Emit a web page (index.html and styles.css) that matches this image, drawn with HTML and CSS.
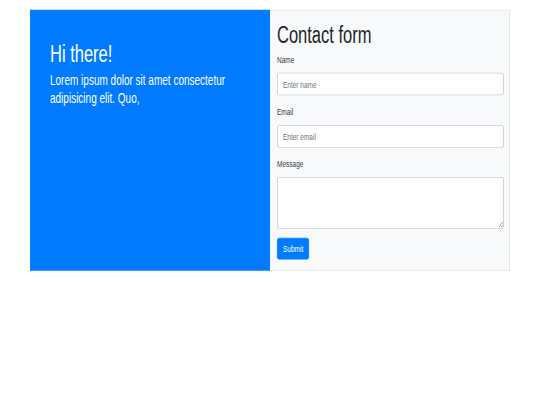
FILE: index.html
```html
<!DOCTYPE html>
<html lang="en">
<head>
<meta charset="utf-8">
<title>Contact</title>
<link rel="stylesheet" href="styles.css">
</head>
<body>
<div class="frame">
  <div class="stage">
    <div class="container">
      <div class="row">
        <section class="intro">
          <h2 class="intro-title">Hi there!</h2>
          <h5 class="intro-text">Lorem ipsum dolor sit amet consectetur adipisicing elit. Quo,</h5>
        </section>
        <section class="panel">
          <h2 class="panel-title">Contact form</h2>
          <form class="form">
            <div class="group">
              <label class="label" for="name">Name</label>
              <input class="control" id="name" type="text" placeholder="Enter name">
            </div>
            <div class="group">
              <label class="label" for="email">Email</label>
              <input class="control" id="email" type="email" placeholder="Enter email">
            </div>
            <div class="group">
              <label class="label" for="msg">Message</label>
              <textarea class="control area" id="msg" rows="3"></textarea>
            </div>
            <button class="btn" type="button">Submit</button>
          </form>
        </section>
      </div>
    </div>
  </div>
</div>
</body>
</html>
```

FILE: styles.css
```css
html, body {
  margin: 0;
  padding: 0;
  background: #ffffff;
  overflow: hidden;
}

body {
  font-family: "Liberation Sans", Arial, Helvetica, sans-serif;
  color: #212529;
}

.frame {
  width: 540px;
  height: 405px;
  overflow: hidden;
}

.stage {
  box-sizing: border-box;
  width: 1080px;
  height: 540px;
  padding-top: 13.3px;
  transform: scale(0.5, 0.75);
  transform-origin: 0 0;
}

.container {
  width: 960px;
  margin: 0 auto;
}

.row {
  display: flex;
}

.intro {
  flex: 0 0 480px;
  box-sizing: border-box;
  background: #007bff;
  color: #ffffff;
  padding: 39px 40px;
}

.intro-title {
  font-size: 33px;
  font-weight: 400;
  line-height: 1.2;
  margin: 0 0 2px;
}

.intro-text {
  font-size: 20px;
  font-weight: 400;
  line-height: 1.2;
  margin: 0;
}

.panel {
  flex: 0 0 480px;
  box-sizing: border-box;
  background: #f8f9fa;
  border-top: 1px solid #e3e6e9;
  border-bottom: 1px solid #e3e6e9;
  border-right: 2px solid #e3e6e9;
  padding: 12px 10px 13.5px 14px;
}

.panel-title {
  font-size: 33px;
  font-weight: 400;
  line-height: 1.2;
  margin: 0 0 4px;
  color: #212529;
}

.form {
  display: flex;
  flex-direction: column;
  align-items: flex-start;
}

.group {
  display: flex;
  flex-direction: column;
  width: 100%;
  margin-bottom: 11.7px;
}

.label {
  font-size: 13px;
  line-height: 1.5;
  margin-bottom: 8px;
  color: #343a40;
}

.control {
  box-sizing: border-box;
  width: 100%;
  height: 30px;
  padding: 4px 10px;
  font-family: inherit;
  font-size: 13px;
  line-height: 1.5;
  color: #495057;
  background: #ffffff;
  border: 1px solid #ced4da;
  border-left-width: 2px;
  border-right-width: 2px;
  border-radius: 4px;
  outline: none;
}

.control::placeholder {
  color: #6c757d;
}

.area {
  height: 69.3px;
  resize: vertical;
}

.btn {
  box-sizing: border-box;
  height: 29.5px;
  padding: 0 11px;
  font-family: inherit;
  font-size: 13px;
  line-height: 1.5;
  color: #ffffff;
  background: #007bff;
  border: 1px solid #007bff;
  border-radius: 4px;
}
```
